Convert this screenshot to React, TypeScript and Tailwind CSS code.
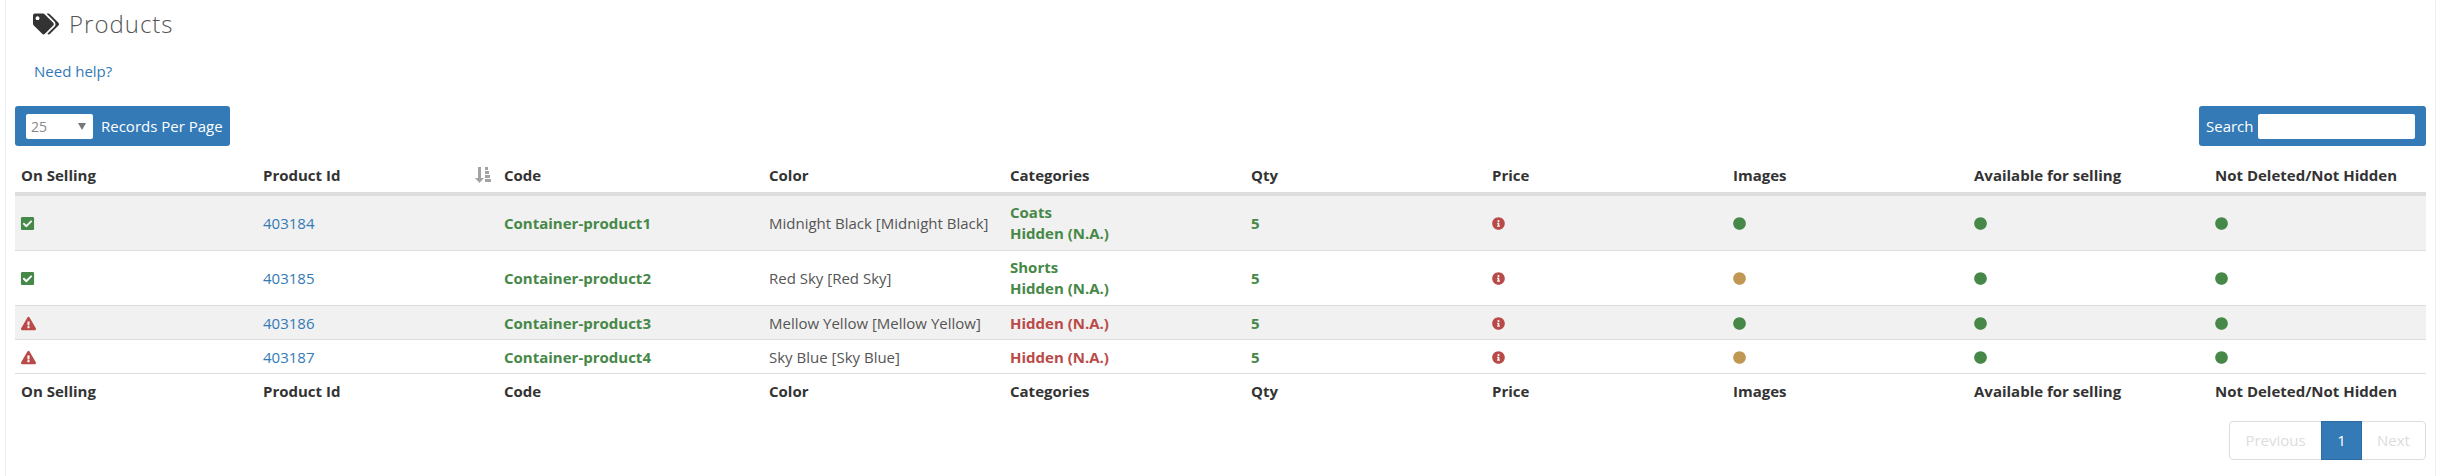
import React from "react";
import { FaTags, FaCheckSquare, FaExclamationTriangle, FaCircle, FaInfoCircle } from "react-icons/fa";

const heads = ["On Selling", "Product Id", "Code", "Color", "Categories", "Qty", "Price", "Images", "Available for selling", "Not Deleted/Not Hidden"];

const rows = [
  { ok: true, id: "403184", code: "Container-product1", color: "Midnight Black [Midnight Black]", cat: "Coats", img: true },
  { ok: true, id: "403185", code: "Container-product2", color: "Red Sky [Red Sky]", cat: "Shorts", img: false },
  { ok: false, id: "403186", code: "Container-product3", color: "Mellow Yellow [Mellow Yellow]", cat: "", img: true },
  { ok: false, id: "403187", code: "Container-product4", color: "Sky Blue [Sky Blue]", cat: "", img: false },
];

function Dot({ ok }: { ok: boolean }) {
  return <FaCircle className={ok ? "text-[#468847] text-[13px]" : "text-[#c09853] text-[13px]"} />;
}

function SortIcon() {
  return (
    <svg viewBox="0 0 16 16" className="absolute right-[7px] top-[8px] w-[16px] h-[16px] text-[#a3a3a3]" fill="currentColor">
      <rect x="3" y="0" width="3" height="11" />
      <polygon points="0,11 9,11 4.5,16" />
      <rect x="10" y="0" width="3" height="3" />
      <rect x="10" y="4" width="4" height="3" />
      <rect x="10" y="8" width="5" height="3" />
      <rect x="10" y="12" width="6" height="3" />
    </svg>
  );
}

export default function App() {
  return (
    <div className="min-h-[476px] w-[2431px] ml-[5px] border-x border-[#eeeeee] bg-white px-[9px] text-[15px] leading-[21px] text-[#333333] font-['Open_Sans',sans-serif]">
      <div className="pl-[18px] pt-[7px] flex items-center gap-[10px] h-[41px] text-[#555555]">
        <FaTags className="text-[26px] text-[#333333]" />
        <h1 className="text-[24px] leading-[34px] font-light tracking-[1px]">Products</h1>
      </div>
      <div className="pl-[19px] mt-[20px] text-[#337ab7]">Need help?</div>
      <div className="mt-[24px] flex justify-between">
        <div className="flex items-center h-[40px] w-[215px] rounded-[3px] bg-[#337ab7] pl-[11px] text-white">
          <div className="flex items-center justify-between w-[67px] h-[25px] rounded-[2px] bg-white pl-[5px] pr-[7px] text-[#888888] text-[14px]">
            <span>25</span>
            <svg viewBox="0 0 8 7" className="w-[8px] h-[7px] text-[#777777]" fill="currentColor">
              <polygon points="0,0 8,0 4,7" />
            </svg>
          </div>
          <span className="ml-[8px]">Records Per Page</span>
        </div>
        <div className="flex items-center h-[40px] w-[227px] rounded-[3px] bg-[#337ab7] pl-[7px] text-white">
          <span>Search</span>
          <div className="ml-[4px] w-[157px] h-[25px] rounded-[2px] bg-white" />
        </div>
      </div>
      <table className="mt-[13px] w-[2411px] table-fixed border-separate border-spacing-0">
        <colgroup>
          <col className="w-[242px]" />
          <col className="w-[241px]" />
          <col className="w-[265px]" />
          <col className="w-[241px]" />
          <col className="w-[241px]" />
          <col className="w-[241px]" />
          <col className="w-[241px]" />
          <col className="w-[241px]" />
          <col className="w-[241px]" />
          <col className="w-[217px]" />
        </colgroup>
        <thead>
          <tr>
            {heads.map((h, i) => (
              <th key={h} className="relative p-[6px] border-b-[4px] border-[#dddddd] text-left font-bold whitespace-nowrap">
                {h}
                {i === 1 && <SortIcon />}
              </th>
            ))}
          </tr>
        </thead>
        <tbody>
          {rows.map((r, i) => {
            const td = i < 2 ? "p-[6px] border-b border-[#dddddd]" : "px-[6px] pt-[7px] pb-[5px] border-b border-[#dddddd]";
            return (
              <tr key={r.id} className={i % 2 === 0 ? "bg-[#f1f1f1]" : ""}>
                <td className={td}>
                  {r.ok ? <FaCheckSquare className="-ml-px text-[15px] text-[#468847]" /> : <FaExclamationTriangle className="text-[15px] text-[#b94a48]" />}
                </td>
                <td className={td + " text-[#337ab7]"}>{r.id}</td>
                <td className={td + " font-bold text-[#468847]"}>{r.code}</td>
                <td className={td + " whitespace-nowrap text-[#555555]"}>{r.color}</td>
                <td className={td + " font-bold"}>
                  {r.cat && <div className="text-[#468847]">{r.cat}</div>}
                  <div className={r.cat ? "text-[#468847]" : "text-[#b94a48]"}>Hidden (N.A.)</div>
                </td>
                <td className={td + " font-bold text-[#468847]"}>5</td>
                <td className={td}><FaInfoCircle className="text-[13px] text-[#b94a48]" /></td>
                <td className={td}><Dot ok={r.img} /></td>
                <td className={td}><Dot ok /></td>
                <td className={td}><Dot ok /></td>
              </tr>
            );
          })}
        </tbody>
        <tfoot>
          <tr>
            {heads.map((h) => (
              <th key={h} className="px-[6px] pt-[7px] pb-[6px] text-left font-bold whitespace-nowrap">{h}</th>
            ))}
          </tr>
        </tfoot>
      </table>
      <div className="mt-[13px] flex justify-end">
        <div className="flex h-[39px] w-[197px] rounded-[4px] border border-[#dddddd] text-[#dddddd]">
          <span className="flex w-[91px] items-center justify-center">Previous</span>
          <span className="-my-px flex w-[41px] items-center justify-center border border-[#2e6da4] bg-[#337ab7] text-white">1</span>
          <span className="flex flex-1 items-center justify-center">Next</span>
        </div>
      </div>
    </div>
  );
}
